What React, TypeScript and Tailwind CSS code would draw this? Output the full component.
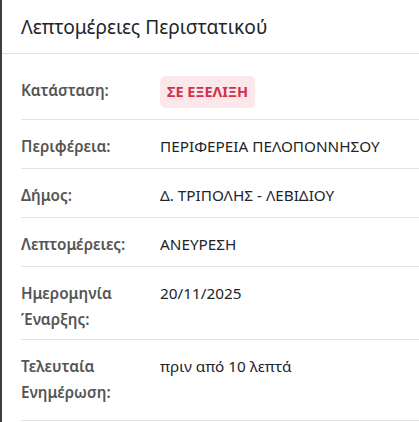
import React from "react";

const rows: { label: string; value: string; pb: string }[] = [
  { label: "Περιφέρεια:", value: "ΠΕΡΙΦΕΡΕΙΑ ΠΕΛΟΠΟΝΝΗΣΟΥ", pb: "pb-[9px]" },
  { label: "Δήμος:", value: "Δ. ΤΡΙΠΟΛΗΣ - ΛΕΒΙΔΙΟΥ", pb: "pb-[9px]" },
  { label: "Λεπτομέρειες:", value: "ΑΝΕΥΡΕΣΗ", pb: "pb-[9px]" },
  { label: "Ημερομηνία Έναρξης:", value: "20/11/2025", pb: "pb-[7px]" },
  { label: "Τελευταία Ενημέρωση:", value: "πριν από 10 λεπτά", pb: "pb-[15px]" },
];

export default function App() {
  return (
    <div
      className="flex w-[419px] h-[422px] bg-[#3a3f44] overflow-hidden"
      style={{ fontFamily: '"Noto Sans", sans-serif' }}
    >
      <div className="ml-[2px] flex-1 bg-white flex flex-col">
        <div className="h-[54px] shrink-0 border-b border-[#dee2e6] flex items-center pl-[19px]">
          <h2 className="text-[19.2px] text-[#212529] leading-none">Λεπτομέρειες Περιστατικού</h2>
        </div>
        <div className="pl-[19px]">
          <div className="h-[66px] pt-[8px] border-b border-[#e3e3e3] flex items-center">
            <div className="w-[139px] text-[15.3px] font-semibold text-[#555]">Κατάσταση:</div>
            <span className="mt-[3px] inline-flex items-center h-[32px] px-[7px] rounded-[5px] bg-[#fce8ea] text-[#d33049] text-[14.5px] font-bold">
              ΣΕ ΕΞΕΛΙΞΗ
            </span>
          </div>
          {rows.map((r) => (
            <div
              key={r.label}
              className={`flex items-start pt-[13px] border-b border-[#e3e3e3] text-[15.3px] leading-[26px] ${r.pb}`}
            >
              <div className="w-[139px] pr-[10px] font-semibold text-[#555]">{r.label}</div>
              <div className="flex-1 text-[#212529]">{r.value}</div>
            </div>
          ))}
        </div>
      </div>
    </div>
  );
}
